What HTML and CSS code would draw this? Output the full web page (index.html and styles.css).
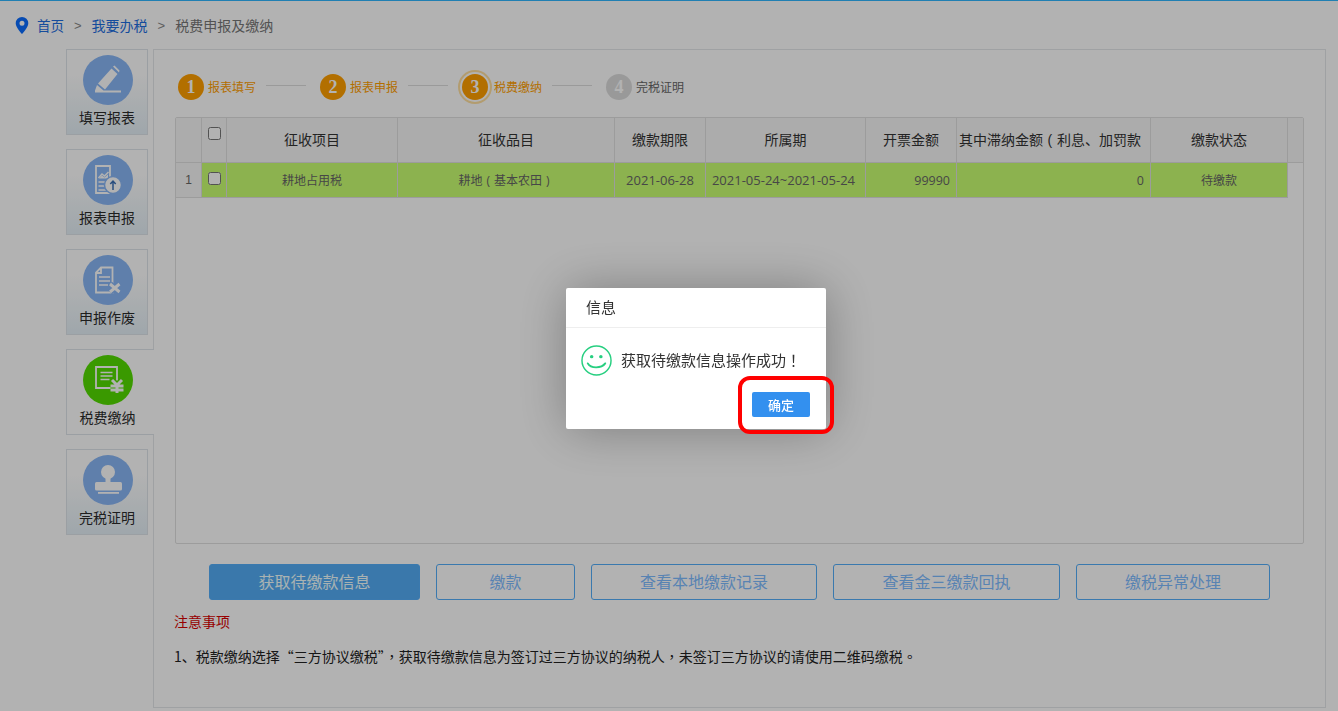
FILE: index.html
```html
<!DOCTYPE html>
<html lang="zh-CN">
<head>
<meta charset="utf-8">
<title>税费申报及缴纳</title>
<link rel="stylesheet" href="styles.css">
</head>
<body>
<div class="page">
  <nav class="crumbs">
    <svg class="pin" viewBox="0 0 14 17"><path d="M7 0a6.3 6.3 0 0 0-6.3 6.3C.7 10.600 7 17 7 17s6.300-6.400 6.300-10.700A6.300 6.300 0 0 0 7 0zm0 8.800a2.500 2.500 0 1 1 0-5 2.500 2.500 0 0 1 0 5z"/></svg>
    <a class="crumb-link crumb-home">首页</a>
    <span class="crumb-sep">&gt;</span>
    <a class="crumb-link">我要办税</a>
    <span class="crumb-sep">&gt;</span>
    <span class="crumb-current">税费申报及缴纳</span>
  </nav>

  <div class="main">
    <aside class="side">
      <div class="tab">
        <span class="disc"><svg viewBox="0 0 50 50"><path d="M30 11.500l1.500-1 5 5-.5 2zM28.500 13.500l6 5.500-12.500 15.500-7-6zM14 30l6.500 5.500H12zM12 35.500h26v2H12z"/></svg></span>
        <span class="tab-label">填写报表</span>
      </div>
      <div class="tab">
        <span class="disc"><svg viewBox="0 0 50 50"><path class="outline" d="M13 11h14v27H13z"/><path class="thin" d="M15.500 23l3.500-4 2.500 2 4-4M15.500 27h9M15.500 31h9M15.500 35h9"/><path class="fill-mid" d="M15.500 24l3.500-3.500 2.500 2 3.500-3v4h-9z"/><circle class="badge" cx="30" cy="30" r="8.500"/><path class="arrow" d="M30 35v-9M27.300 29l2.700-3 2.700 3"/></svg></span>
        <span class="tab-label">报表申报</span>
      </div>
      <div class="tab">
        <span class="disc"><svg viewBox="0 0 50 50"><path class="outline" d="M18 12.500h11.500v25H13V17.500zM18 13v5h-5"/><path class="thin" d="M16 22h11M16 26h11M16 30h9"/><path class="halo" d="M27 29l9.500 8M36.500 29l-9.500 8"/><path class="cross" d="M27 29l9.500 8M36.500 29l-9.500 8"/></svg></span>
        <span class="tab-label">申报作废</span>
      </div>
      <div class="tab tab-active">
        <span class="disc disc-green"><svg viewBox="0 0 50 50"><path class="outline" d="M13 12h21v21H13z"/><path class="thin" d="M17.500 17.500h12M17.500 21h12M17.500 24.500h9"/><path class="halo-green" d="M29 25l5 5 5-5M27.500 31h13M27.500 35h13M34 30v8"/><path class="cross" d="M29 25l5 5 5-5M27.500 31h13M27.500 35h13M34 30v8"/></svg></span>
        <span class="tab-label">税费缴纳</span>
      </div>
      <div class="tab">
        <span class="disc"><svg viewBox="0 0 50 50"><circle cx="25" cy="17" r="7"/><path d="M22.500 22h5v6h-5z"/><rect x="12" y="27" width="27" height="8.500" rx="1.500"/><path d="M15 37h21v1.800H15z"/></svg></span>
        <span class="tab-label">完税证明</span>
      </div>
    </aside>

    <section class="panel">
      <ol class="steps">
        <li class="step step-done"><b class="step-no">1</b><span>报表填写</span></li>
        <li class="step-line"></li>
        <li class="step step-done"><b class="step-no">2</b><span>报表申报</span></li>
        <li class="step-line"></li>
        <li class="step step-done step-now"><b class="step-no">3</b><span>税费缴纳</span></li>
        <li class="step-line"></li>
        <li class="step"><b class="step-no">4</b><span>完税证明</span></li>
      </ol>

      <div class="grid-box">
        <table class="grid">
          <colgroup>
            <col class="c-no"><col class="c-check"><col class="c-item"><col class="c-kind"><col class="c-due"><col class="c-period"><col class="c-amount"><col class="c-late"><col class="c-state"><col class="c-bar">
          </colgroup>
          <thead>
            <tr>
              <th></th>
              <th class="check-head"><input type="checkbox"></th>
              <th>征收项目</th>
              <th>征收品目</th>
              <th>缴款期限</th>
              <th>所属期</th>
              <th>开票金额</th>
              <th class="late-head">其中滞纳金额<span class="paren">(</span>利息、加罚款</th>
              <th>缴款状态</th>
              <th></th>
            </tr>
          </thead>
          <tbody>
            <tr>
              <td class="row-no">1</td>
              <td class="cell check-cell"><input type="checkbox"></td>
              <td class="cell">耕地占用税</td>
              <td class="cell">耕地<span class="paren">(</span>基本农田<span class="paren">)</span></td>
              <td class="cell date">2021-06-28</td>
              <td class="cell date period">2021-05-24~2021-05-24</td>
              <td class="cell num">99990</td>
              <td class="cell num">0</td>
              <td class="cell">待缴款</td>
              <td class="blank"></td>
            </tr>
          </tbody>
        </table>
      </div>

      <div class="actions">
        <button class="btn btn-main">获取待缴款信息</button>
        <button class="btn btn-pay">缴款</button>
        <button class="btn btn-wide">查看本地缴款记录</button>
        <button class="btn btn-wider">查看金三缴款回执</button>
        <button class="btn btn-last">缴税异常处理</button>
      </div>

      <h4 class="notes-title">注意事项</h4>
      <p class="notes">1、税款缴纳选择“三方协议缴税”<span class="mid" lang="zh-TW">，</span>获取待缴款信息为签订过三方协议的纳税人<span class="mid" lang="zh-TW">，</span>未签订三方协议的请使用二维码缴税<span class="mid" lang="zh-TW">。</span></p>
    </section>
  </div>
</div>

<div class="shade"></div>

<div class="dialog">
  <div class="dialog-title">信息</div>
  <div class="dialog-body">
    <svg class="smile" viewBox="0 0 32 32"><circle class="smile-ring" cx="16" cy="16" r="15"/><circle class="smile-eye" cx="11" cy="12" r="1.800"/><circle class="smile-eye" cx="20.500" cy="12" r="1.800"/><path class="smile-mouth" d="M7 19c3 5.500 14 5.500 18 0"/></svg>
    <span class="dialog-text">获取待缴款信息操作成功<span class="mid" lang="zh-TW">！</span></span>
  </div>
  <div class="dialog-foot"><button class="dialog-ok">确定</button></div>
</div>
<div class="mark"></div>
</body>
</html>
```
FILE: styles.css
```css
* { box-sizing: border-box; }
html, body { margin: 0; height: 100%; overflow: hidden; }
body {
  background: #fff;
  color: #333;
  font-family: "Liberation Sans", "Noto Sans CJK SC", sans-serif;
  font-size: 14px;
}
.page { width: 1338px; height: 711px; border-top: 1px solid #2eb7ff; }

.crumbs { height: 48px; display: flex; align-items: center; padding-left: 15px; }
.pin { width: 14px; height: 17px; margin-right: 8px; fill: #0a6cff; }
.crumb-link { color: #1e6ee0; }
.crumb-home { font-size: 13.500px; }
.crumb-sep { color: #888; margin: 0 10px; font-size: 13px; }
.crumb-current { color: #777; }

.main { display: flex; padding-left: 66px; }
.side { width: 87px; display: flex; flex-direction: column; gap: 14px; position: relative; z-index: 1; }
.tab {
  width: 82px; height: 86px;
  border: 1px solid #dfe4ea;
  background: linear-gradient(#fff 30%, #e4eff6);
  display: flex; flex-direction: column; align-items: center;
  padding-top: 5px;
}
.tab-active { width: 88px; background: #fff; border-right: 0; padding-right: 6px; }
.disc { width: 50px; height: 50px; border-radius: 50%; background: #88b6f5; display: block; margin-left: 1px; }
.disc-green { background: #53dc00; }
.disc svg { width: 50px; height: 50px; display: block; fill: #fff; }
.disc .thin { fill: none; stroke: #fff; stroke-width: 1.500; }
.disc .fill-mid { fill: #fff; }
.disc .outline { fill: none; stroke: #fff; stroke-width: 1.800; }
.disc .cross { fill: none; stroke: #fff; stroke-width: 3; }
.disc .halo { fill: none; stroke: #88b6f5; stroke-width: 6; }
.disc .halo-green { fill: none; stroke: #53dc00; stroke-width: 6; }
.disc .badge { fill: #fff; stroke: #88b6f5; stroke-width: 1.500; }
.disc .arrow { fill: none; stroke: #3a6fb5; stroke-width: 1.500; }
.tab-label { margin-top: 3px; line-height: 20px; color: #2c2c2c; }

.panel { width: 1173px; height: 659px; border: 1px solid #e4e7ea; padding: 20px 21px 0; }

.steps { list-style: none; margin: 0; padding: 0 0 0 3px; height: 34px; display: flex; align-items: center; }
.step { display: flex; align-items: center; gap: 4px; font-size: 12px; color: #666; }
.step span { width: 48px; white-space: nowrap; margin-bottom: 2px; }
.step-no {
  width: 26px; height: 26px; border-radius: 50%;
  background: #dcdcdc; color: #fff;
  font: bold 18px/26px "Liberation Serif", serif;
  text-align: center;
}
.step-done { color: #ffa000; }
.step-done .step-no { background: #ffa000; }
.step-now { gap: 6px; }
.step-now .step-no { box-shadow: 0 0 0 2px #fff, 0 0 0 4px #ffe0a0; }
.step-line { width: 40px; height: 1px; background: #ddd; margin: -4px 14px 0 10px; }

.grid-box { width: 1129px; height: 427px; margin-top: 13px; border: 1px solid #e0e0e0; border-radius: 2px; }
.grid { border-collapse: separate; border-spacing: 0; table-layout: fixed; width: 1127px; }
.c-no { width: 26px; }
.c-check { width: 25px; }
.c-item { width: 171px; }
.c-kind { width: 217px; }
.c-due { width: 91px; }
.c-period { width: 160px; }
.c-amount { width: 91px; }
.c-late { width: 194px; }
.c-state { width: 137px; }
.c-bar { width: 15px; }
.grid th {
  height: 45px; padding: 0 0 2px; background: #f6f6f6;
  border-right: 1px solid #e0e0e0; border-bottom: 1px solid #e0e0e0;
  font-weight: 400; font-size: 14px; color: #333; white-space: nowrap; overflow: hidden;
}
.grid th:last-child { border-right: 0; }
.grid th.check-head { vertical-align: top; padding-top: 9px; }
.grid th.late-head { text-align: left; padding-left: 2px; }
.grid input { width: 13px; height: 13px; margin: 0 0 0 6px; display: block; }
.grid td { height: 35px; padding: 0; font-size: 12px; color: #666; text-align: center; white-space: nowrap; }
.row-no { background: #f6f6f6; border-right: 1px solid #e0e0e0; border-bottom: 1px solid #e0e0e0; }
.grid .cell { background: #c9ff71; border-right: 1px solid #e0e0e0; border-bottom: 1px solid #e0e0e0; font-family: "Open Sans", "Noto Sans CJK SC", sans-serif; }
.grid .date { font-size: 13px; }
.grid .period { padding-right: 4px; }
.grid .num { text-align: right; padding-right: 6px; font-size: 12.500px; }
.grid .check-cell { padding-bottom: 3px; }
.paren { padding: 0 .33em; }
.mid { font-family: "Noto Sans CJK TC", sans-serif; }

.actions { display: flex; gap: 16px; margin: 20px 0 0 34px; }
.btn {
  height: 36px; border: 1px solid #54aefa; border-radius: 3px; background: #fff; color: #7fbcff;
  font: 16px "Liberation Sans", "Noto Sans CJK SC", sans-serif; padding: 0 0 2px;
}
.btn-main { width: 211px; background: #54adf5; color: #f2ffff; }
.btn-pay { width: 139px; }
.btn-wide { width: 226px; }
.btn-wider { width: 227px; }
.btn-last { width: 194px; }

.notes-title { margin: 12px 0 0 -1px; font-size: 14px; font-weight: 400; line-height: 20px; color: #d80000; }
.notes { margin: 14px 0 0 -1px; font-family: "Noto Sans CJK SC", sans-serif; font-size: 14px; line-height: 20px; color: #222; }

.shade { position: fixed; inset: 0; background: rgba(0, 0, 0, .3); z-index: 10; }

.dialog {
  position: fixed; left: 566px; top: 288px; width: 260px; height: 141px;
  background: #fff; border-radius: 2px;
  box-shadow: 1px 1px 50px rgba(0, 0, 0, .3);
  z-index: 11;
}
.dialog-title { height: 40px; padding-left: 20px; line-height: 40px; font-size: 15px; color: #333; border-bottom: 1px solid #eee; }
.dialog-body { display: flex; align-items: center; gap: 9px; padding-left: 15px; height: 64px; color: #333; font-size: 15px; }
.dialog-text { margin-bottom: 2px; white-space: nowrap; }
.smile { width: 31px; height: 31px; flex: none; }
.smile-ring { fill: none; stroke: #27cf80; stroke-width: 1.500; }
.smile-eye { fill: #27cf80; }
.smile-mouth { fill: none; stroke: #27cf80; stroke-width: 2; stroke-linecap: round; }
.dialog-foot { display: flex; justify-content: flex-end; padding-right: 16px; }
.dialog-ok {
  width: 58px; height: 25px; border: 0; border-radius: 2px; background: #3390ef; color: #fff; padding: 0;
  font: 500 13px "Liberation Sans", "Noto Sans CJK SC", sans-serif;
}

.mark {
  position: fixed; left: 738px; top: 376px; width: 96px; height: 58px;
  border: 4px solid #f00; border-radius: 12px; z-index: 12;
}
```
